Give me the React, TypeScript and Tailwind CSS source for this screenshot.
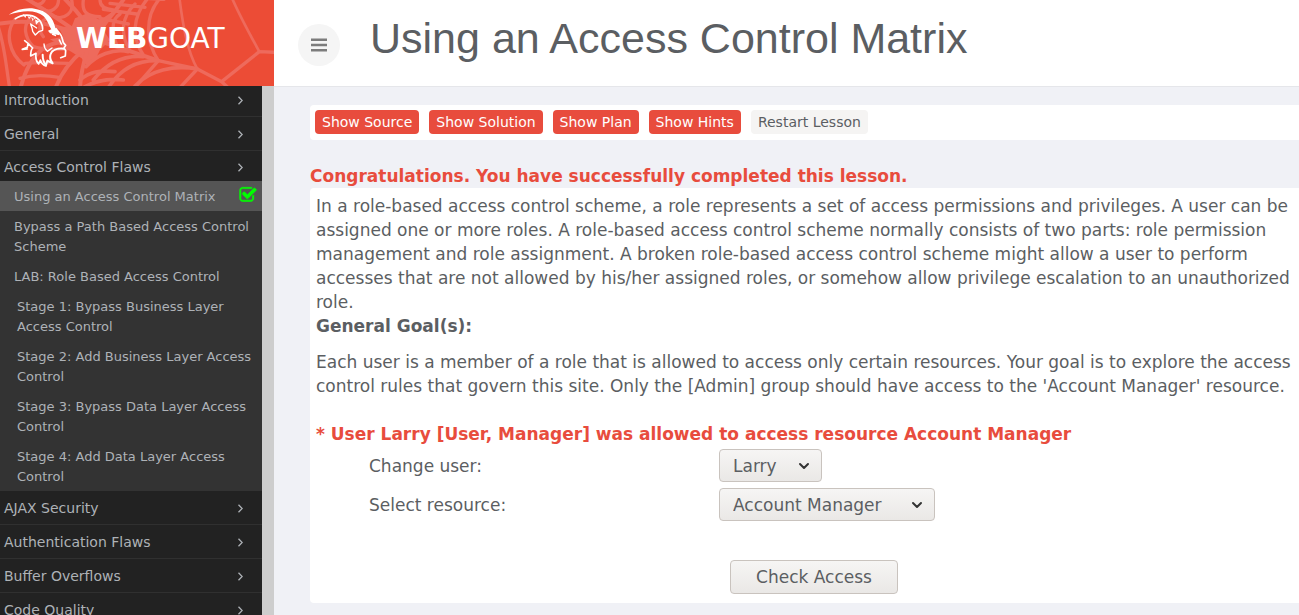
import React, { useState } from "react";
import { ChevronDown } from "lucide-react";

const topics = ["Introduction", "General", "Access Control Flaws"];
const moreTopics = ["AJAX Security", "Authentication Flaws", "Buffer Overflows", "Code Quality"];
const lessons = [
  { title: "Using an Access Control Matrix", active: true },
  { title: "Bypass a Path Based Access Control Scheme" },
  { title: "LAB: Role Based Access Control" },
  { title: "Stage 1: Bypass Business Layer Access Control", stage: true },
  { title: "Stage 2: Add Business Layer Access Control", stage: true },
  { title: "Stage 3: Bypass Data Layer Access Control", stage: true },
  { title: "Stage 4: Add Data Layer Access Control", stage: true },
];

function Web() {
  return (
    <svg className="absolute inset-0 h-full w-full" viewBox="0 0 822 258" preserveAspectRatio="xMinYMin slice" fill="none" stroke="#ee6a5c" strokeLinecap="round" strokeLinejoin="round" aria-hidden="true">
      <path fill="#ee6a5c" stroke="none" d="M262 40 L300 60 L345 30 L310 90 L330 120 L300 150 L285 180 L262 200 L245 175 L205 150 L150 118 L190 110 L175 80 L215 80 L225 55 Z" />
      <path strokeWidth="12" d="M250 110 C180 60 120 20 70 -10 M240 110 C150 60 60 60 -10 72 M240 130 C150 110 90 150 60 270 M250 150 C215 180 180 220 165 270 M262 150 C250 190 240 230 240 270 M290 120 C350 140 410 160 475 182 M255 70 C240 40 215 20 190 -8 M300 90 C330 50 350 30 375 -8" />
      <path strokeWidth="10" d="M475 182 L592 207 L665 245 L778 155 L830 157 M592 207 L535 268 M665 245 L690 268 M475 182 L400 268" />
      <path strokeWidth="8" d="M778 155 C745 95 720 50 695 -8 M538 -8 C548 70 560 150 592 207" />
      <path strokeWidth="10" d="M482 -8 C430 50 440 130 475 182 M446 -8 C395 50 395 115 430 165 M405 12 C365 50 360 100 388 150 M360 42 C332 60 335 95 350 135 M375 -8 L492 -2 M300 55 L385 72 M310 28 L410 42 M330 10 L435 22" />
      <path strokeWidth="11" d="M592 207 C520 195 450 210 405 258 M475 182 C415 180 360 205 322 268 M430 170 C370 165 320 190 280 240 M385 155 C340 145 290 165 258 200 M240 240 C270 215 300 210 345 215 M240 268 C290 238 330 235 370 240" />
      <path strokeWidth="10" d="M215 0 C225 40 190 60 165 50 M175 -8 C180 25 150 42 130 28 M135 -8 C130 15 110 20 92 4 M250 0 C245 35 260 50 300 50 M300 0 C300 20 320 28 340 30 M145 55 C120 60 110 85 130 110 M95 50 C65 75 75 115 100 140 M45 58 C15 95 25 160 72 195 M-6 78 C15 140 18 200 30 270 M100 140 C130 150 180 150 210 145 M76 190 C120 185 160 190 205 190 M60 235 C95 225 135 225 178 232" />
    </svg>
  );
}

function Goat() {
  return (
    <svg className="relative h-[60px] w-[60px] shrink-0" viewBox="24 21 180 180" fill="none" stroke="#fff" strokeLinejoin="round" strokeLinecap="round" aria-hidden="true">
      <path fill="#fff" stroke="none" d="M26 44 C50 28 78 22 104 26 C140 32 160 52 166 84 L178 100 L178 106 L150 100 L144 92 L154 88 C146 76 144 62 130 48 C108 29 70 30 26 44 Z" />
      <path strokeWidth="5" d="M46 56 C66 42 94 42 110 54 C122 62 128 72 128 88" />
      <path fill="#fff" stroke="none" d="M68 42 L76 54 L80 44 L88 58 L92 46 L98 64 L104 52 L108 74 L118 64 Z" />
      <path strokeWidth="4" d="M92 72 C94 80 98 86 98 94 L106 105 L116 95 L128 91 M92 72 L110 84" />
      <path strokeWidth="5" d="M168 86 L182 104 C187 110 187 120 190 128 L197 136 L192 144 L197 152 L196 168 L182 173 M158 103 L166 106 M184 132 L178 120" />
      <path strokeWidth="6" d="M192 146 C172 144 156 150 152 162 C148 172 150 180 158 190 L142 182 L138 196 C130 186 128 174 128 164" />
      <path strokeWidth="4" d="M132 132 C132 142 136 148 142 154 L156 144" />
      <path strokeWidth="5" d="M74 122 L84 130 L98 144 C92 150 92 158 92 168 L108 160 C106 174 108 184 116 192 L121 180 C124 190 130 196 138 198 M84 130 L82 142 L67 148 L82 147" />
    </svg>
  );
}

function Topic({ title, open = false }: { title: string; open?: boolean }) {
  return (
    <a
      href="#"
      aria-expanded={open}
      className={
        open
          ? "flex items-center justify-between pt-1.5 pr-[19px] pb-1 pl-1 text-sm/5"
          : "flex items-center justify-between border-b border-[#303030] pt-[7px] pr-[19px] pb-1.5 pl-1 text-sm/5"
      }
    >
      {title}
      <svg className="h-[9px] w-[5px]" viewBox="0 0 5 9" fill="none" stroke="currentColor" strokeWidth="1.300" aria-hidden="true">
        <path d="M0.500 0.700 L4.200 4.500 L0.500 8.300" />
      </svg>
    </a>
  );
}

function Sidebar() {
  return (
    <aside className="flex w-[274px] shrink-0 flex-col overflow-hidden">
      <div className="relative z-10 flex h-[86px] shrink-0 overflow-hidden bg-[#ec4c36] pt-[7px] pl-2">
        <Web />
        <Goat />
        <a href="#" className="relative ml-2 pt-3 text-[28px]/[40px] text-white">
          <b className="font-bold">WEB</b>GOAT
        </a>
      </div>
      <nav className="-mt-[3px] flex-1 overflow-hidden border-r-12 border-[#cdcdcd] bg-[#222] text-[#aeb2b7]">
        {topics.map((t) => (
          <Topic key={t} title={t} open={t === "Access Control Flaws"} />
        ))}
        <ul className="bg-[#333] text-[13px]/5">
          {lessons.map((l) => (
            <li key={l.title} className={l.active ? "bg-[#555]" : ""}>
              <a href="#" className={l.stage ? "flex pt-1.5 pr-1 pb-1 pl-[17px]" : "flex pt-1.5 pr-1 pb-1 pl-3.5"}>
                <span className="flex-1">{l.title}</span>
                {l.active && (
                  <svg className="-mt-px mr-px h-[18px] w-[18px]" viewBox="0 0 1792 1792" fill="#0f0" stroke="#0f0" strokeWidth="60" role="img" aria-label="Completed">
                    <path d="M1472 930v318q0 119-84.500 203.500t-203.500 84.500h-832q-119 0-203.500-84.500t-84.500-203.500v-832q0-119 84.500-203.500t203.500-84.500h832q63 0 117 25 15 7 18 23 3 17-9 29l-49 49q-10 10-23 10-3 0-9-2-23-6-45-6h-832q-66 0-113 47t-47 113v832q0 66 47 113t113 47h832q66 0 113-47t47-113v-254q0-13 9-22l64-64q10-10 23-10 6 0 12 3 20 8 20 29zm231-489l-814 814q-24 24-57 24t-57-24l-430-430q-24-24-24-57t24-57l110-110q24-24 57-24t57 24l263 263 647-647q24-24 57-24t57 24l110 110q24 24 24 57t-24 57z" />
                  </svg>
                )}
              </a>
            </li>
          ))}
        </ul>
        {moreTopics.map((t) => (
          <Topic key={t} title={t} />
        ))}
      </nav>
    </aside>
  );
}

function Choice({ id, value, options, onChange, wide = false }: { id: string; value: string; options: string[]; onChange: (v: string) => void; wide?: boolean }) {
  return (
    <span className="relative inline-flex items-center justify-self-start">
      <select
        id={id}
        value={value}
        onChange={(e) => onChange(e.target.value)}
        className={
          wide
            ? "h-[33px] w-[216px] appearance-none rounded border border-[#c9c3be] bg-linear-to-b from-[#f6f5f4] to-[#eae8e6] pl-[13px]"
            : "h-[33px] w-[103px] appearance-none rounded border border-[#c9c3be] bg-linear-to-b from-[#f6f5f4] to-[#eae8e6] pl-[13px]"
        }
      >
        {options.map((o) => (
          <option key={o}>{o}</option>
        ))}
      </select>
      <ChevronDown className="pointer-events-none absolute right-2.5 size-4 text-[#333]" strokeWidth={3} aria-hidden="true" />
    </span>
  );
}

export default function App() {
  const [user, setUser] = useState("Larry");
  const [resource, setResource] = useState("Account Manager");
  return (
    <div className="flex h-screen overflow-hidden bg-[#f0f1f6] text-[#5b5e62] [font-family:'DejaVu_Sans',sans-serif]">
      <Sidebar />
      <div className="min-w-0 flex-1">
        <header className="flex h-[87px] border-b border-[#e5e6ea] bg-white pl-6">
          <button aria-label="Toggle menu" className="mt-6 flex size-[42px] items-center justify-center rounded-full bg-[#f5f5f5]">
            <svg className="h-[14px] w-4" viewBox="0 0 16 14" fill="#7c7c7c" aria-hidden="true">
              <path d="M0 0.500h16v2.500H0zM0 5.700h16v2.500H0zM0 11h16v2.500H0z" />
            </svg>
          </button>
          <h1 className="ml-[30px] pt-3.5 text-[43px]/[48px] whitespace-nowrap [font-family:'Liberation_Sans',Arial,sans-serif]">Using an Access Control Matrix</h1>
        </header>
        <main className="pt-[18px] pl-9">
          <div className="flex gap-2.5 rounded-l bg-white px-[5px] pt-[5px] pb-1.5 text-sm/6">
            {["Show Source", "Show Solution", "Show Plan", "Show Hints"].map((label) => (
              <button key={label} className="rounded bg-[#e84c3d] px-[7px] text-white">{label}</button>
            ))}
            <button className="rounded bg-[#f5f4f3] px-[7px]">Restart Lesson</button>
          </div>
          <p className="pt-6 text-[17px]/6 font-bold text-[#e84c3d]">Congratulations. You have successfully completed this lesson.</p>
          <section className="rounded-l bg-white px-1.5 pt-1.5 pb-[9px] text-[17px]/6">
            <p>
              In a role-based access control scheme, a role represents a set of access permissions and privileges. A user can be assigned one or more roles. A role-based access control scheme normally consists of two parts: role permission management and role assignment. A broken role-based access control scheme might allow a user to perform accesses that are not allowed by his/her assigned roles, or somehow allow privilege escalation to an unauthorized role.
            </p>
            <h2 className="font-bold">General Goal(s):</h2>
            <p className="pt-3">
              Each user is a member of a role that is allowed to access only certain resources. Your goal is to explore the access control rules that govern this site. Only the [Admin] group should have access to the 'Account Manager' resource.
            </p>
            <p className="pt-6 font-bold text-[#e84c3d]">* User Larry [User, Manager] was allowed to access resource Account Manager</p>
            <form onSubmit={(e) => e.preventDefault()}>
              <div className="grid grid-cols-[350px_1fr] items-center gap-y-1.5 pt-[3px] pl-[53px]">
                <label htmlFor="user">Change user:</label>
                <Choice id="user" value={user} onChange={setUser} options={["Moe", "Larry", "Curly", "Shemp"]} />
                <label htmlFor="resource">Select resource:</label>
                <Choice id="resource" wide value={resource} onChange={setResource} options={["Public Share", "Time Card Entry", "Performance Review", "Time Card Approval", "Site Manager", "Account Manager"]} />
              </div>
              <button type="submit" className="mt-[39px] ml-[414px] block h-[34px] w-[168px] rounded border border-[#c9c3be] bg-linear-to-b from-[#f6f5f4] to-[#eae8e6]">Check Access</button>
            </form>
          </section>
        </main>
      </div>
    </div>
  );
}
